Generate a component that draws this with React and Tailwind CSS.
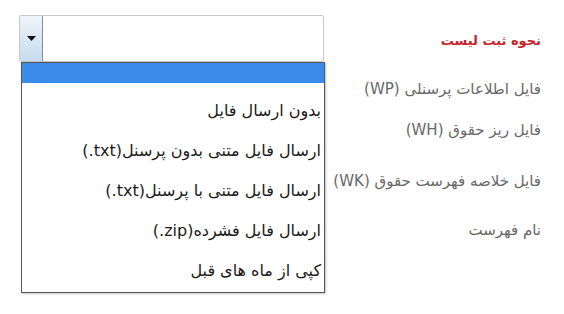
import React from "react";

const items = [
  ["بدون ارسال فایل", ""],
  ["ارسال فایل متنی بدون پرسنل", "(.txt)"],
  ["ارسال فایل متنی با پرسنل", "(.txt)"],
  ["ارسال فایل فشرده", "(.zip)"],
  ["کپی از ماه های قبل", ""],
];

export default function App() {
  const fa = { fontFamily: '"DejaVu Sans", "Noto Sans", sans-serif' };
  return (
    <div className="w-[564px] h-[314px] bg-white flex overflow-hidden" style={fa}>
      <div className="pl-[19px] pt-[15px] shrink-0 relative z-10">
        <div className="relative w-[305px] h-[47px] border border-[#c8c8c8] rounded-[2px] bg-white flex">
          <div className="w-[23px] h-full border-r border-[#8a8a8a] bg-gradient-to-b from-[#eef5fc] to-[#c6dbef] rounded-l-[2px] flex items-center justify-center">
            <svg width="9" height="5" viewBox="0 0 9 5">
              <path d="M0 0 H9 L4.5 5 Z" fill="#111" />
            </svg>
          </div>
          <div
            dir="rtl"
            className="absolute left-[1px] top-[46px] w-[304px] border border-[#555] bg-white shadow-[1px_1px_2px_rgba(0,0,0,0.25)] flex flex-col pb-[1px]"
          >
            <div className="h-[20px] bg-[#3a8bea] shrink-0" />
            <div className="h-[8px]" />
            {items.map(([t, ext]) => (
              <div
                key={t}
                className="h-[40px] flex items-center pr-[3px] text-[16px] text-[#1a1a1a] whitespace-nowrap"
              >
                {t}
                {ext && <bdi dir="ltr">{ext}</bdi>}
              </div>
            ))}
          </div>
        </div>
      </div>
      <div dir="rtl" className="flex-1 flex flex-col pr-[23px] pt-[30px] text-[15px] text-[#686868]">
        <div className="h-[22px] flex items-center font-bold text-[13px] text-[#c4262e] whitespace-nowrap">
          نحوه ثبت لیست
        </div>
        <div className="h-[22px] mt-[26px] flex items-center whitespace-nowrap">
          فایل اطلاعات پرسنلی (WP)
        </div>
        <div className="h-[22px] mt-[19px] flex items-center whitespace-nowrap">
          فایل ریز حقوق (WH)
        </div>
        <div className="h-[22px] mt-[29px] flex items-center whitespace-nowrap">
          فایل خلاصه فهرست حقوق (WK)
        </div>
        <div className="h-[22px] mt-[27px] flex items-center whitespace-nowrap">
          نام فهرست
        </div>
      </div>
    </div>
  );
}
